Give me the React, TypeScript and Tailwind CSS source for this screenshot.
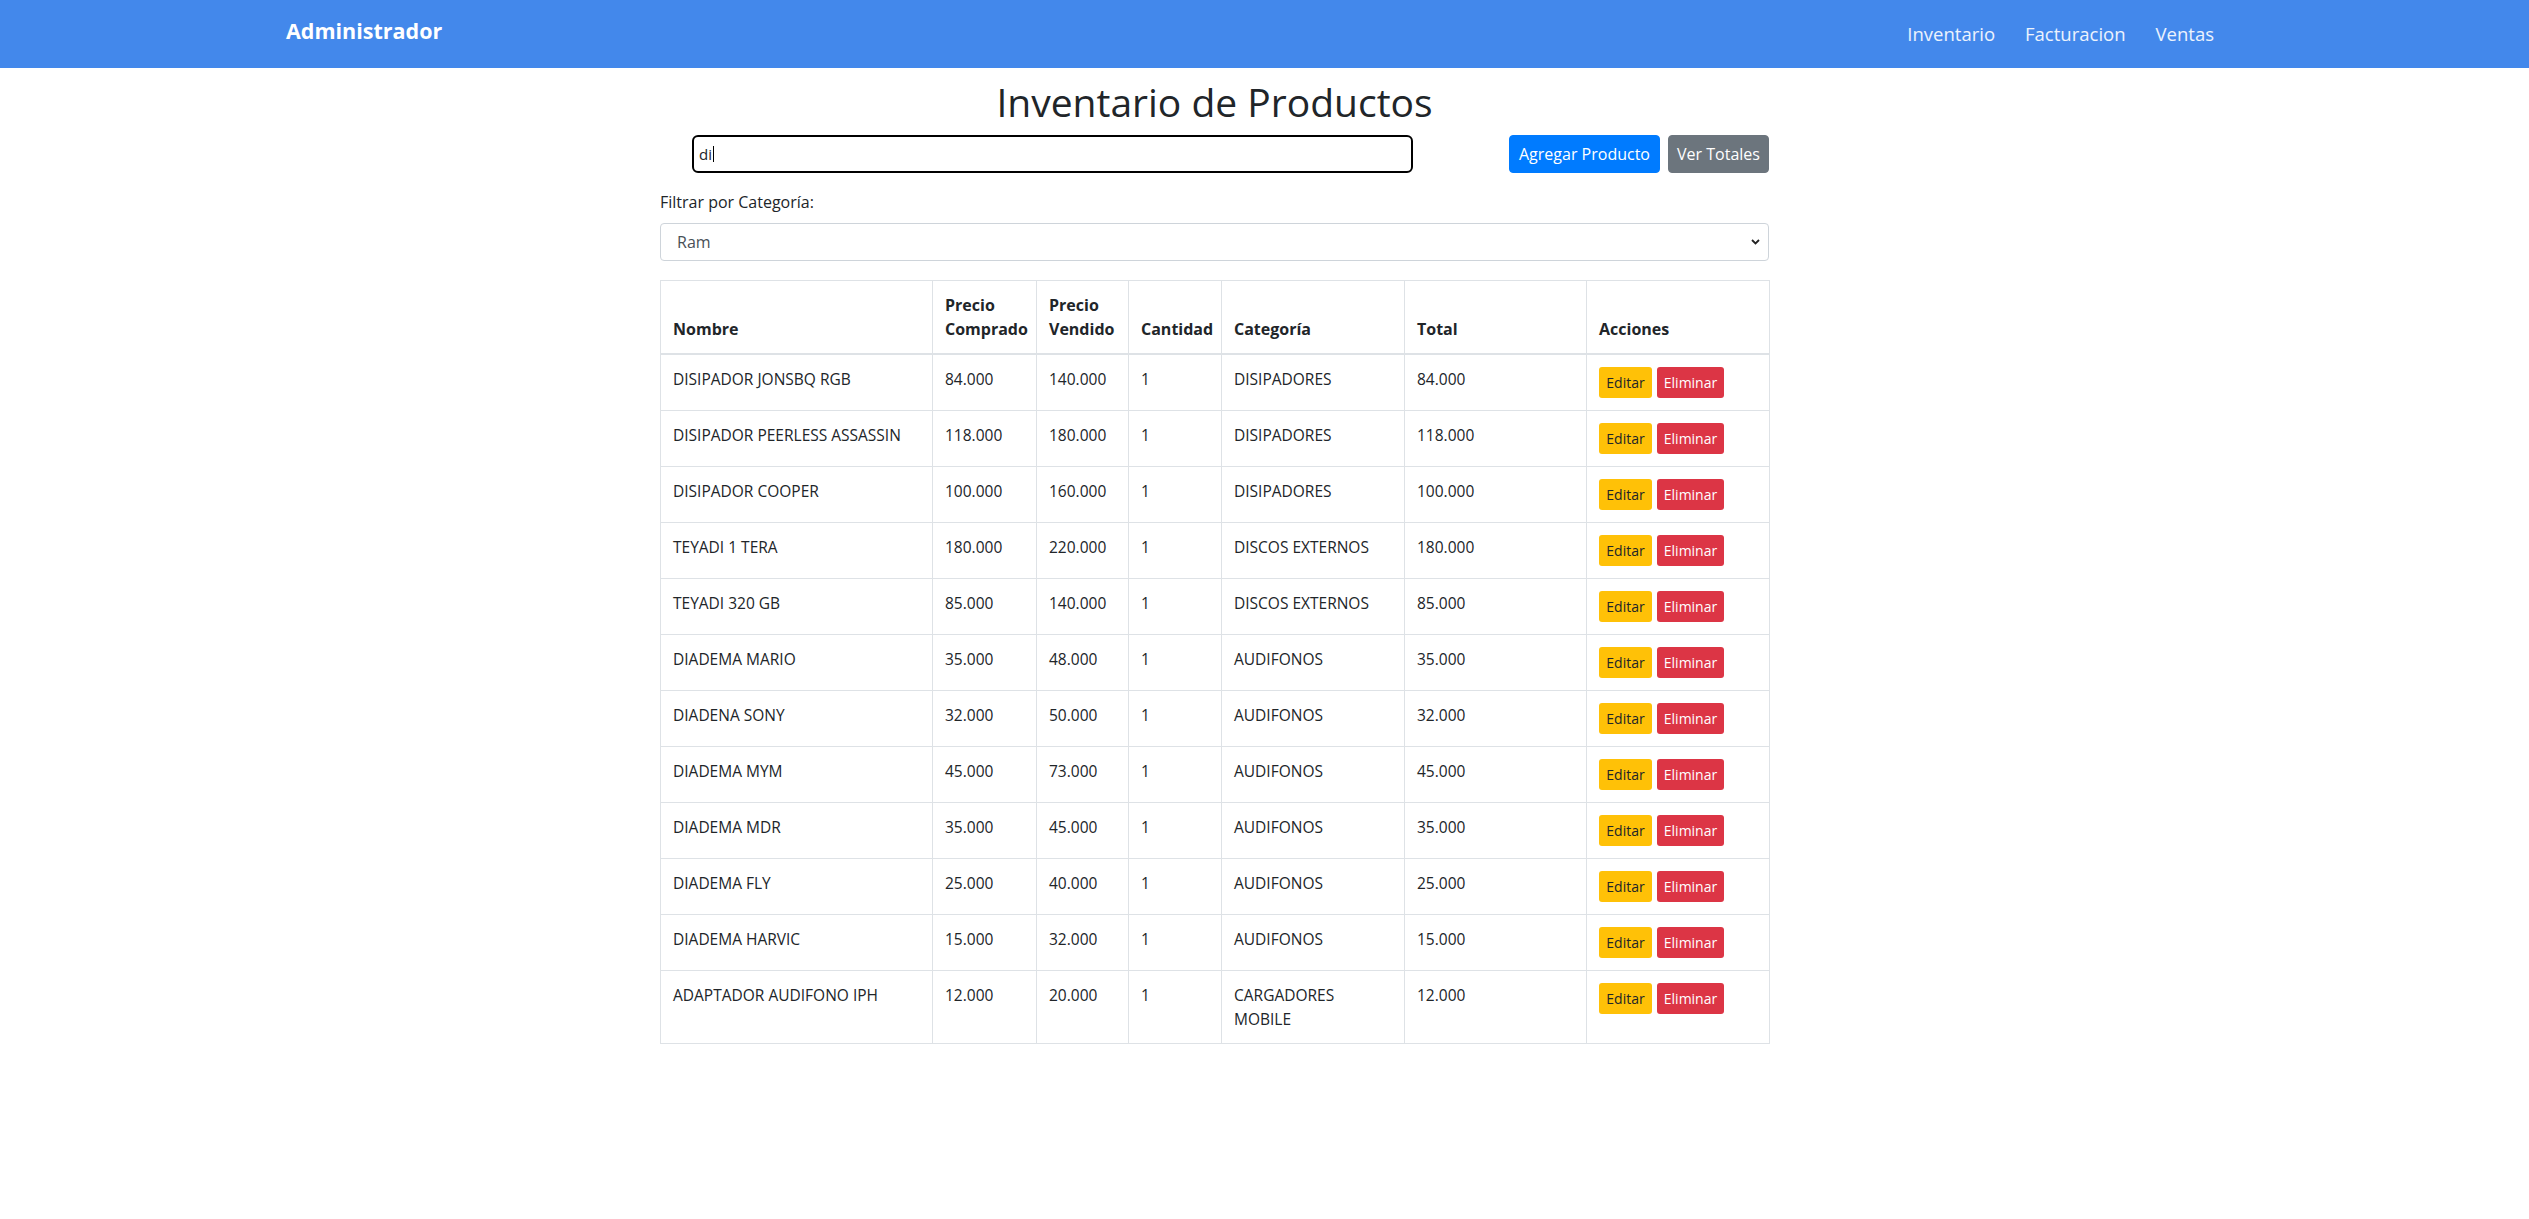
import React, { useState } from 'react';

type Producto = {
  nombre: string;
  comprado: string;
  vendido: string;
  cantidad: number;
  categoria: string;
  total: string;
};

const productos: Producto[] = [
  { nombre: 'DISIPADOR JONSBQ RGB', comprado: '84.000', vendido: '140.000', cantidad: 1, categoria: 'DISIPADORES', total: '84.000' },
  { nombre: 'DISIPADOR PEERLESS ASSASSIN', comprado: '118.000', vendido: '180.000', cantidad: 1, categoria: 'DISIPADORES', total: '118.000' },
  { nombre: 'DISIPADOR COOPER', comprado: '100.000', vendido: '160.000', cantidad: 1, categoria: 'DISIPADORES', total: '100.000' },
  { nombre: 'TEYADI 1 TERA', comprado: '180.000', vendido: '220.000', cantidad: 1, categoria: 'DISCOS EXTERNOS', total: '180.000' },
  { nombre: 'TEYADI 320 GB', comprado: '85.000', vendido: '140.000', cantidad: 1, categoria: 'DISCOS EXTERNOS', total: '85.000' },
  { nombre: 'DIADEMA MARIO', comprado: '35.000', vendido: '48.000', cantidad: 1, categoria: 'AUDIFONOS', total: '35.000' },
  { nombre: 'DIADENA SONY', comprado: '32.000', vendido: '50.000', cantidad: 1, categoria: 'AUDIFONOS', total: '32.000' },
  { nombre: 'DIADEMA MYM', comprado: '45.000', vendido: '73.000', cantidad: 1, categoria: 'AUDIFONOS', total: '45.000' },
  { nombre: 'DIADEMA MDR', comprado: '35.000', vendido: '45.000', cantidad: 1, categoria: 'AUDIFONOS', total: '35.000' },
  { nombre: 'DIADEMA FLY', comprado: '25.000', vendido: '40.000', cantidad: 1, categoria: 'AUDIFONOS', total: '25.000' },
  { nombre: 'DIADEMA HARVIC', comprado: '15.000', vendido: '32.000', cantidad: 1, categoria: 'AUDIFONOS', total: '15.000' },
  { nombre: 'ADAPTADOR AUDIFONO IPH', comprado: '12.000', vendido: '20.000', cantidad: 1, categoria: 'CARGADORES MOBILE', total: '12.000' },
];

const Navbar: React.FC = () => (
  <nav className="h-[68px] bg-[#4388eb] flex justify-between">
    <a className="ml-[286px] mt-[16px] h-[30px] text-[21.5px] leading-[30px] font-bold text-white">Administrador</a>
    <ul className="mr-[315px] mt-[20px] flex gap-[30px] text-[18.5px] leading-[28px] text-white/90">
      <li>Inventario</li>
      <li>Facturacion</li>
      <li>Ventas</li>
    </ul>
  </nav>
);

export default function App() {
  const [search] = useState('di');
  const [categoria, setCategoria] = useState('Ram');

  const th = 'border border-[#dee2e6] border-b-2 p-[12px] align-bottom text-left font-bold';
  const td = 'border border-[#dee2e6] p-[12px] align-top text-[15.5px]';

  return (
    <div className="min-h-screen bg-white text-[16px] leading-[24px] text-[#212529] font-['Open_Sans','Noto_Sans',sans-serif]">
      <Navbar />

      <main className="ml-[660px] w-[1109px] pb-10">
        <h1 className="mt-[10px] text-center text-[39px] leading-[48px] font-medium">Inventario de Productos</h1>

        <div className="mt-[9px] flex items-center">
          <div className="ml-[32px] w-[721px] h-[38px] border-2 border-black rounded-[6px] flex items-center pl-[5px] text-[15px]">
            <span>{search}</span>
            <span className="ml-[1px] w-[1px] h-[16px] bg-black" />
          </div>
          <div className="ml-auto flex gap-[8px]">
            <button className="w-[151px] h-[38px] rounded-[4px] bg-[#007bff] border border-[#007bff] text-white">Agregar Producto</button>
            <button className="w-[101px] h-[38px] rounded-[4px] bg-[#6c757d] border border-[#6c757d] text-white">Ver Totales</button>
          </div>
        </div>

        <label className="block mt-[17px]">Filtrar por Categoría:</label>
        <div className="relative mt-[9px]">
          <select
            value={categoria}
            onChange={e => setCategoria(e.target.value)}
            className="w-full h-[38px] appearance-none rounded-[4px] border border-[#ced4da] bg-white pl-[16px] text-[#495057] outline-none"
          >
            <option>Ram</option>
            <option>Disipadores</option>
            <option>Audifonos</option>
          </select>
          <svg className="absolute right-[9px] top-[16px] pointer-events-none" width="9" height="6" viewBox="0 0 9 6">
            <path d="M1 1 L4.5 4.5 L8 1" fill="none" stroke="#222" strokeWidth="1.8" />
          </svg>
        </div>

        <table className="mt-[19px] w-[1109px] table-fixed border-collapse">
          <thead>
            <tr>
              <th className={`${th} w-[272px]`}>Nombre</th>
              <th className={`${th} w-[104px]`}>Precio Comprado</th>
              <th className={`${th} w-[92px]`}>Precio Vendido</th>
              <th className={`${th} w-[93px]`}>Cantidad</th>
              <th className={`${th} w-[183px]`}>Categoría</th>
              <th className={`${th} w-[182px]`}>Total</th>
              <th className={`${th} w-[183px]`}>Acciones</th>
            </tr>
          </thead>
          <tbody>
            {productos.map((p, i) => (
              <tr key={i}>
                <td className={td}>{p.nombre}</td>
                <td className={td}>{p.comprado}</td>
                <td className={td}>{p.vendido}</td>
                <td className={td}>{p.cantidad}</td>
                <td className={td}>{p.categoria}</td>
                <td className={td}>{p.total}</td>
                <td className={td}>
                  <div className="flex gap-[5px]">
                    <button className="w-[53px] h-[31px] rounded-[3px] bg-[#ffc107] text-[14px] leading-[21px] text-[#212529]">Editar</button>
                    <button className="w-[67px] h-[31px] rounded-[3px] bg-[#dc3545] text-[14px] leading-[21px] text-white">Eliminar</button>
                  </div>
                </td>
              </tr>
            ))}
          </tbody>
        </table>
      </main>
    </div>
  );
}
